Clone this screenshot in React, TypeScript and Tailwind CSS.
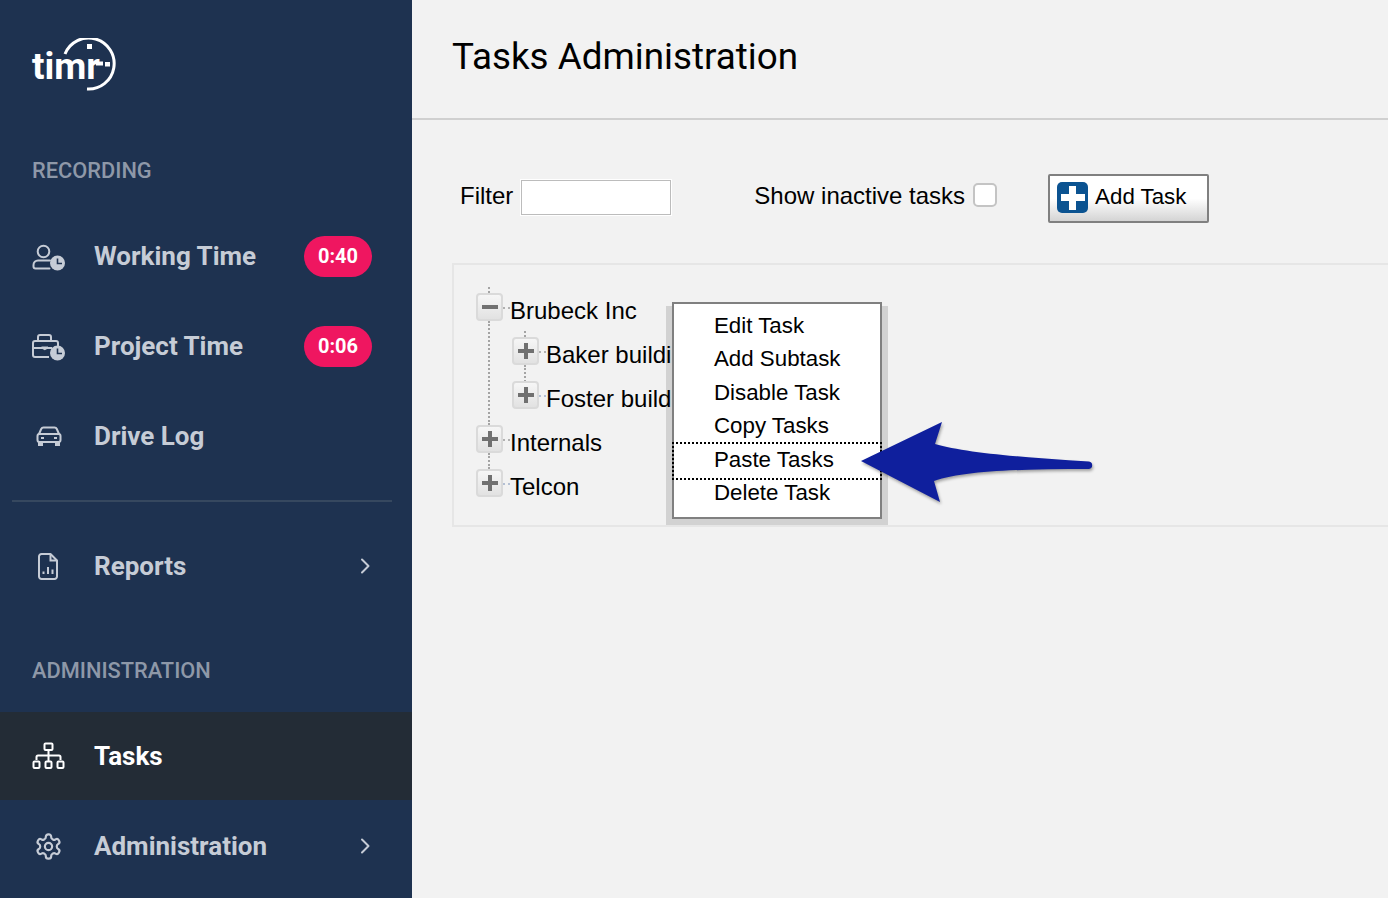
import React from "react";

const sans = "font-['Roboto',sans-serif]";
const ar = "font-['Liberation_Sans',Arial,sans-serif]";

function UserClock() {
  return (
    <svg className="overflow-visible" width="34" height="28" viewBox="0 0 34 28" fill="none" stroke="currentColor" strokeWidth="2">
      <circle cx="11.500" cy="9.500" r="5.800" />
      <path d="M18 18.500h-12a4.500 4.500 0 0 0-4.500 4.500v1.500a2 2 0 0 0 2 2h14" strokeLinecap="round" />
      <circle cx="25.500" cy="21" r="7.500" fill="currentColor" stroke="none" />
      <path d="M25.500 16.500v5h4.500" stroke="#1e3250" strokeWidth="1.600" />
    </svg>
  );
}
function CaseClock() {
  return (
    <svg className="overflow-visible" width="34" height="28" viewBox="0 0 34 28" fill="none" stroke="currentColor" strokeWidth="2">
      <path d="M6 9V5a2 2 0 0 1 2-2h9a2 2 0 0 1 2 2v4" />
      <path d="M17 25H3a2 2 0 0 1-2-2V11a2 2 0 0 1 2-2h21a2 2 0 0 1 2 2v3" />
      <path d="M1.500 16h9M15 16h5" />
      <path d="M9.500 14.500h6.500v2l-3.200 1.800-3.300-1.800z" fill="currentColor" stroke="none" />
      <circle cx="25.500" cy="21" r="7.500" fill="currentColor" stroke="none" />
      <path d="M25.500 16.500v5h4.500" stroke="#1e3250" strokeWidth="1.600" />
    </svg>
  );
}
function Car() {
  return (
    <svg width="26" height="20" viewBox="0 0 26 20" fill="none" stroke="currentColor" strokeWidth="2">
      <path d="M3 8l2.200-5a2.500 2.500 0 0 1 2.300-1.500h11a2.500 2.500 0 0 1 2.300 1.500l2.200 5" />
      <rect x="1.500" y="8" width="23" height="8" rx="2" />
      <path d="M2 8h22" />
      <path d="M3 16v3h3v-3M20 16v3h3v-3" fill="currentColor" />
      <path d="M5 12h3M18 12h3" />
    </svg>
  );
}
function Report() {
  return (
    <svg className="mr-0.5" width="20" height="27" viewBox="0 0 20 27" fill="none" stroke="currentColor" strokeWidth="2">
      <path d="M12.500 1h-9a2.500 2.500 0 0 0-2.500 2.500v20a2.500 2.500 0 0 0 2.500 2.500h13a2.500 2.500 0 0 0 2.500-2.500v-16z" strokeLinejoin="round" />
      <path d="M12.500 1v6.500h6" />
      <path d="M5.500 21v-2.500M10 21v-7M14.500 21v-4.500" />
    </svg>
  );
}
function Org() {
  return (
    <svg width="34" height="28" viewBox="0 0 34 28" fill="none" stroke="currentColor" strokeWidth="2">
      <rect x="12.500" y="1.500" width="8" height="6.500" rx="1" />
      <path d="M16.500 8v11M4.500 18v-3a1.500 1.500 0 0 1 1.500-1.500h21a1.500 1.500 0 0 1 1.500 1.500v3" />
      <rect x="1.500" y="19.500" width="6" height="6.500" rx="1" />
      <rect x="13.500" y="19.500" width="6" height="6.500" rx="1" />
      <rect x="25.500" y="19.500" width="6" height="6.500" rx="1" />
    </svg>
  );
}
function Gear() {
  return (
    <svg className="mr-px" width="29" height="29" viewBox="0 0 24 24" fill="none" stroke="currentColor" strokeWidth="1.800" strokeLinecap="round" strokeLinejoin="round">
      <path d="M12.220 2h-.440a2 2 0 0 0-2 2v.180a2 2 0 0 1-1 1.730l-.430.250a2 2 0 0 1-2 0l-.150-.080a2 2 0 0 0-2.730.730l-.220.380a2 2 0 0 0 .730 2.730l.150.100a2 2 0 0 1 1 1.720v.510a2 2 0 0 1-1 1.740l-.150.090a2 2 0 0 0-.730 2.730l.220.380a2 2 0 0 0 2.730.730l.150-.080a2 2 0 0 1 2 0l.430.250a2 2 0 0 1 1 1.730V20a2 2 0 0 0 2 2h.440a2 2 0 0 0 2-2v-.180a2 2 0 0 1 1-1.730l.430-.250a2 2 0 0 1 2 0l.150.080a2 2 0 0 0 2.730-.730l.220-.390a2 2 0 0 0-.730-2.730l-.150-.080a2 2 0 0 1-1-1.740v-.500a2 2 0 0 1 1-1.740l.150-.090a2 2 0 0 0 .730-2.730l-.220-.380a2 2 0 0 0-2.730-.730l-.150.080a2 2 0 0 1-2 0l-.430-.250a2 2 0 0 1-1-1.730V4a2 2 0 0 0-2-2z" />
      <circle cx="12" cy="12" r="3" />
    </svg>
  );
}
function Chevron() {
  return (
    <svg className="mr-px" width="12" height="18" viewBox="0 0 12 18" fill="none" stroke="currentColor" strokeWidth="2" strokeLinecap="round" strokeLinejoin="round">
      <path d="M3 2.500l6.500 6.500-6.500 6.500" />
    </svg>
  );
}

function NavItem({ icon, label, badge, chevron, active }: { icon: React.ReactNode; label: string; badge?: string; chevron?: boolean; active?: boolean }) {
  return (
    <div className={`flex items-center pl-8 pr-10 ${active ? "bg-[#232c36] text-white h-[88px]" : "text-[#c6ccd6] h-[90px]"}`}>
      <div className="w-[34px] flex justify-center shrink-0">{icon}</div>
      <div className="ml-[28px] text-[26px] font-bold leading-none flex-1 whitespace-nowrap">{label}</div>
      {badge && (
        <div className="w-[68px] h-[41px] rounded-full bg-[#ef1660] text-white text-[20px] font-bold flex items-center justify-center">{badge}</div>
      )}
      {chevron && <Chevron />}
    </div>
  );
}

function Sidebar() {
  return (
    <aside className={`w-[412px] h-[898px] shrink-0 bg-[#1e3250] overflow-hidden ${sans}`}>
      <div className="h-[148px] pl-8 pt-[38px]">
        <div className="relative w-[90px] h-[54px]">
          <svg className="absolute left-0 top-0" width="90" height="54" viewBox="0 0 90 54" fill="none" stroke="#fff" strokeWidth="3">
            <path d="M33 16A25.500 25.500 0 1 1 55 51" />
            <rect x="55" y="6" width="5" height="5" fill="#fff" stroke="none" />
            <rect x="73" y="24" width="5" height="4.500" fill="#fff" stroke="none" />
            <path d="M64 25.500h7" strokeWidth="4" />
          </svg>
          <div className="absolute left-0 top-[2px] text-white text-[37px] font-bold leading-[54px]">timr</div>
        </div>
      </div>
      <div className="h-[45px] flex items-center pl-8 text-[21.800px] font-medium text-[#8e98a8] leading-none">RECORDING</div>
      <div className="h-[18px]" />
      <NavItem icon={<UserClock />} label="Working Time" badge="0:40" />
      <NavItem icon={<CaseClock />} label="Project Time" badge="0:06" />
      <NavItem icon={<Car />} label="Drive Log" />
      <div className="ml-3 mr-5 mt-[19px] h-0.5 bg-[#36485f]" />
      <div className="h-[19px]" />
      <NavItem icon={<Report />} label="Reports" chevron />
      <div className="h-[37px]" />
      <div className="h-[45px] flex items-center pl-8 text-[21.800px] font-medium text-[#8e98a8] leading-none">ADMINISTRATION</div>
      <div className="h-[19px]" />
      <NavItem icon={<Org />} label="Tasks" active />
      <div className="h-px" />
      <NavItem icon={<Gear />} label="Administration" chevron />
    </aside>
  );
}

function Box({ minus, up = 0, down = 0, bluish }: { minus?: boolean; up?: number; down?: number; bluish?: boolean }) {
  return (
    <div className="relative w-[27px] h-[28px] shrink-0 rounded-[4px] border-2 border-[#dadada] bg-gradient-to-b from-[#f6f6f6] to-[#e2e2e2] flex items-center justify-center">
      <div className="relative w-4 h-4">
        <div className="absolute left-0 top-[6px] w-4 h-1 bg-[#707070]" />
        {!minus && <div className="absolute left-[6px] top-0 w-1 h-4 bg-[#707070]" />}
      </div>
      {up > 0 && <div className="absolute left-[10px] border-l-2 border-dotted border-[#a4a4a4]" style={{ top: -up - 2, height: up }} />}
      {down > 0 && <div className="absolute left-[10px] border-l-2 border-dotted border-[#a4a4a4]" style={{ top: 26, height: down }} />}
      <div className={`absolute left-[25px] top-[12px] w-[7px] border-t-2 border-dotted ${bluish ? "border-[#b4c0d4]" : "border-[#b0b0b0]"}`} />
    </div>
  );
}

function TreeRow({ label, indent, ...box }: { label: string; indent?: boolean; minus?: boolean; up?: number; down?: number; bluish?: boolean }) {
  return (
    <div className={`flex items-start h-11 whitespace-nowrap ${indent ? "pl-[36px]" : ""}`}>
      <Box {...box} />
      <span className="ml-[7px] mt-[4px] text-[24px] leading-[28px] text-black">{label}</span>
    </div>
  );
}

function Arrow() {
  return (
    <svg className="absolute left-[855px] top-[415px] z-20" width="245" height="95" viewBox="855 415 245 95" style={{ filter: "drop-shadow(1px 2px 1.500px rgba(0,0,0,.35))" }}>
      <path
        d="M861 461L942 422L935 444C965 453 1030 458 1089 461.500A3.800 3.800 0 0 1 1089 469C1030 469 965 470 934 481L940 502Z"
        fill="#0f1f9d"
      />
    </svg>
  );
}

function Menu() {
  return (
    <>
      <div className="absolute left-[666px] top-[306px] w-[222px] h-[219px] bg-[#d2d2d2]" />
      <div className={`absolute left-[672px] top-[302px] z-10 w-[210px] h-[217px] bg-white border-2 border-[#808080] text-[22.300px] leading-[28px] text-black pt-[8px] ${ar}`}>
        <div className="pl-[40px] h-[33px]">Edit Task</div>
        <div className="pl-[40px] h-[34px]">Add Subtask</div>
        <div className="pl-[40px] h-[33px]">Disable Task</div>
        <div className="pl-[40px] h-[30px]">Copy Tasks</div>
        <div className="-mx-[2px] pl-[40px] h-[38px] border-2 border-dotted border-black pt-[2px]">Paste Tasks</div>
        <div className="pl-[40px] -mt-px">Delete Task</div>
      </div>
    </>
  );
}

function Main() {
  return (
    <main className={`relative flex-1 h-[898px] bg-[#f2f2f2] overflow-hidden ${ar}`}>
      <div className="h-[120px] border-b-2 border-[#d0d0d0] pl-10 pt-[34px]">
        <h1 className={`text-[36.800px] leading-[46px] text-black font-normal ${sans}`}>Tasks Administration</h1>
      </div>
      <div className="flex items-start pl-[48px] pt-[54px] h-[143px] text-[24px] leading-[28px] text-black">
        <span className="mt-[8px]">Filter</span>
        <div className="ml-2 mt-[6px] w-[150px] h-[35px] bg-white border border-[#bcbcbc] outline outline-1 outline-white" />
        <span className="ml-[83px] mt-[8px]">Show inactive tasks</span>
        <div className="ml-2 mt-[9px] w-6 h-[24px] rounded-[5px] bg-white border-2 border-[#c4c4c4]" />
        <div className="ml-[51px] w-[161px] h-[49px] flex items-center border-2 border-[#808080] rounded-[2px] bg-gradient-to-b from-white from-50% to-[#d4d4d4] pl-[7px]">
          <div className="relative -mt-[2px] w-[31px] h-[31px] rounded-[5px] bg-[#0b5391] flex items-center justify-center shrink-0">
            <div className="absolute w-[24px] h-[7px] bg-white" />
            <div className="absolute w-[7px] h-[24px] bg-white" />
          </div>
          <span className="ml-[7px] -mt-[4px] text-[22.300px]">Add Task</span>
        </div>
      </div>
      <div className="ml-10 h-[264px] border-2 border-r-0 border-[#e6e6e6] pt-[28px] pl-[22px] overflow-hidden">
        <div className="relative z-[1] w-[350px]">
          <TreeRow label="Brubeck Inc" minus up={6} down={104} />
          <TreeRow label="Baker building" indent up={6} down={17} />
          <TreeRow label="Foster building" indent bluish />
          <TreeRow label="Internals" down={16} />
          <TreeRow label="Telcon" bluish />
        </div>
      </div>
    </main>
  );
}

export default function App() {
  return (
    <div className="relative flex w-[1388px] h-[898px] overflow-hidden">
      <Sidebar />
      <Main />
      <Menu />
      <Arrow />
    </div>
  );
}
